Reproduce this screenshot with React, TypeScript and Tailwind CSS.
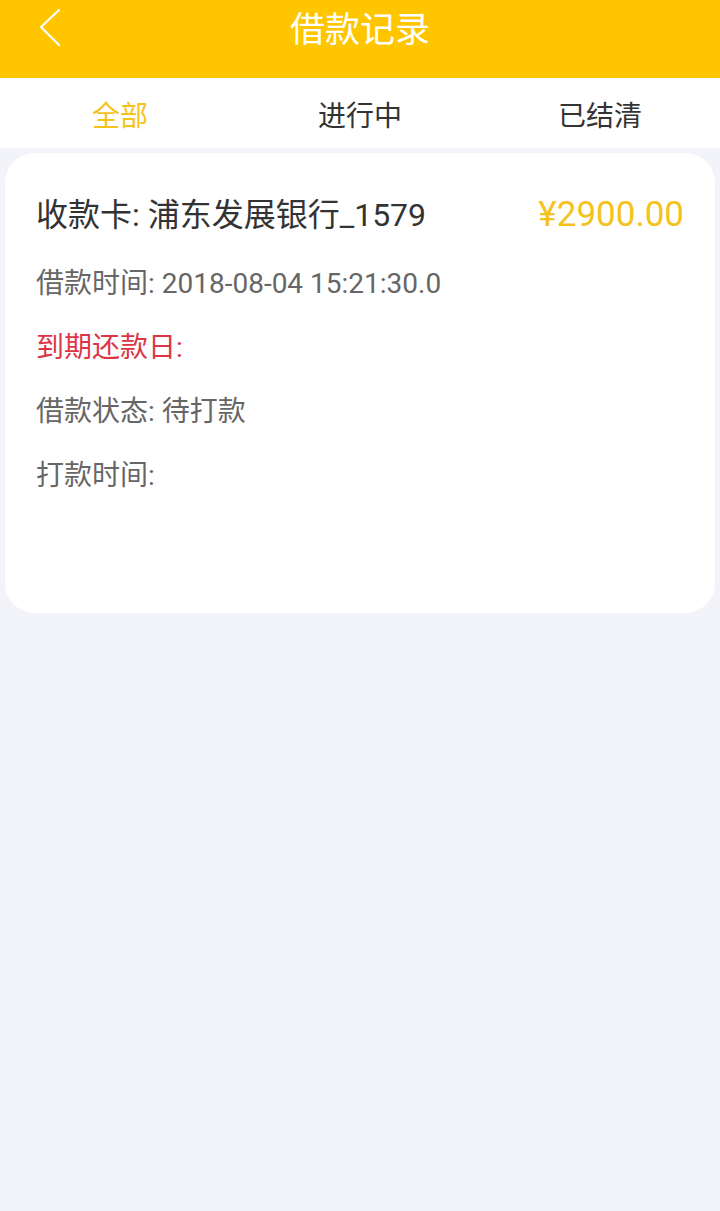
const font = { fontFamily: 'Roboto, "Noto Sans CJK SC", sans-serif' };

const tabs = ["全部", "进行中", "已结清"];

const BackIcon = () => (
  <svg width="24" height="40" viewBox="0 0 24 40" fill="none">
    <path d="M21 2 L3 19 L21 37" stroke="white" strokeWidth="2.2" strokeLinecap="round" strokeLinejoin="round" />
  </svg>
);

export default function App() {
  const record = {
    card: "浦东发展银行_1579",
    amount: "¥2900.00",
    time: "2018-08-04 15:21:30.0",
    status: "待打款",
  };

  return (
    <div className="min-h-[1211px] bg-[#f3f4f9] flex flex-col" style={font}>
      <div className="h-[78px] bg-[#ffc600] flex items-center relative shrink-0">
        <button className="absolute left-[38px] top-[8px]">
          <BackIcon />
        </button>
        <h1 className="w-full text-center text-white text-[35px] leading-none -mt-[18px]">借款记录</h1>
      </div>

      <div className="h-[70px] bg-white grid grid-cols-3 shrink-0 pt-[7px]">
        {tabs.map((t, i) => (
          <div
            key={t}
            className={`flex items-center justify-center text-[28px] ${i === 0 ? "text-[#f5c21b]" : "text-[#333333]"}`}
          >
            {t}
          </div>
        ))}
      </div>

      <div className="px-[5px] pt-[5px]">
        <div className="bg-white rounded-[30px] h-[460px] px-[31px] pt-[40px]">
          <div className="flex items-center justify-between h-[44px]">
            <p className="text-[32px] text-[#333333]">收款卡: {record.card}</p>
            <p className="text-[35px] text-[#f5c21b]">{record.amount}</p>
          </div>
          <div className="mt-[30px] flex flex-col gap-[30px] text-[28px] leading-[34px] text-[#666666]">
            <p>借款时间: {record.time}</p>
            <p className="text-[#dc3545]">到期还款日:</p>
            <p>借款状态: {record.status}</p>
            <p>打款时间:</p>
          </div>
        </div>
      </div>
    </div>
  );
}
